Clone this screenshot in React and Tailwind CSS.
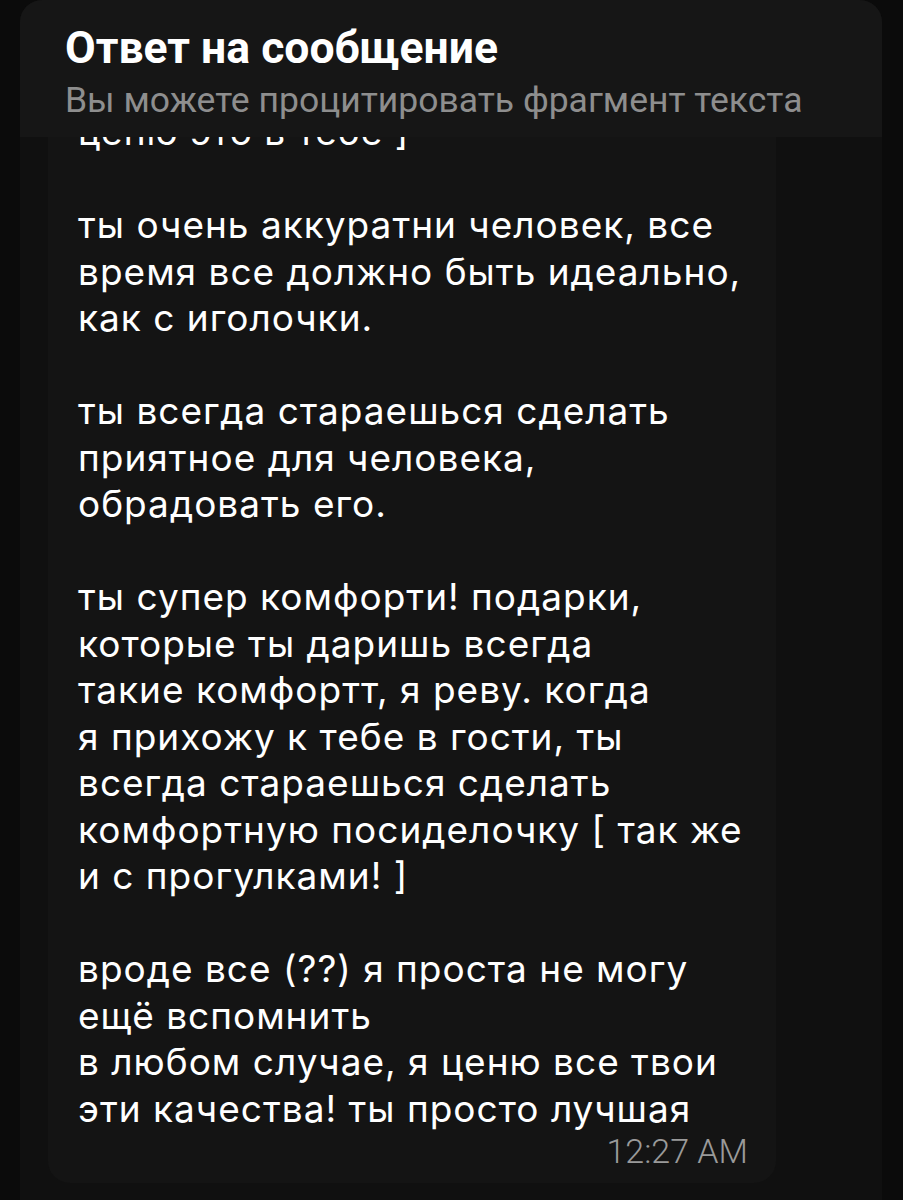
const lines = [
  'ценю это в тебе ]',
  '',
  'ты очень аккуратни человек, все',
  'время все должно быть идеально,',
  'как с иголочки.',
  '',
  'ты всегда стараешься сделать',
  'приятное для человека,',
  'обрадовать его.',
  '',
  'ты супер комфорти! подарки,',
  'которые ты даришь всегда',
  'такие комфортт, я реву. когда',
  'я прихожу к тебе в гости, ты',
  'всегда стараешься сделать',
  'комфортную посиделочку [ так же',
  'и с прогулками! ]',
  '',
  'вроде все (??) я проста не могу',
  'ещё вспомнить',
  'в любом случае, я ценю все твои',
  'эти качества! ты просто лучшая',
];

export default function App() {
  return (
    <div className="min-h-[1200px] bg-[#0b0b0b] px-[20px]" style={{ fontFamily: 'Inter, "Noto Sans", sans-serif' }}>
      <div className="relative min-h-[1200px] w-[862px] rounded-t-[22px] bg-[#101010]">
        {/* message bubble, top part scrolled under the header */}
        <div className="ml-[28px] w-[728px] rounded-b-[22px] bg-[#141414] pl-[30px] pr-[28px] pt-[109px] pb-[14px]">
          <div className="text-[37px] leading-[46.5px] tracking-[1px] text-white">
            {lines.map((l, i) => (
              <div key={i} className="h-[46.5px] whitespace-pre">{l}</div>
            ))}
          </div>
          <div className="mt-[1px] text-right text-[34px] font-light leading-[36px] text-[#9a9a9a]" style={{ fontFamily: 'Roboto, sans-serif' }}>
            12:27 AM
          </div>
        </div>

        {/* reply header overlay */}
        <div className="absolute left-0 top-0 h-[137px] w-full rounded-t-[22px] bg-[#161616] pl-[45px] pt-[22px]" style={{ fontFamily: 'Roboto, sans-serif' }}>
          <div className="text-[44.5px] font-bold leading-[52px] text-white">Ответ на сообщение</div>
          <div className="mt-[4px] text-[35.5px] leading-[44px] text-[#8e8e8e]">Вы можете процитировать фрагмент текста</div>
        </div>
      </div>
    </div>
  );
}
